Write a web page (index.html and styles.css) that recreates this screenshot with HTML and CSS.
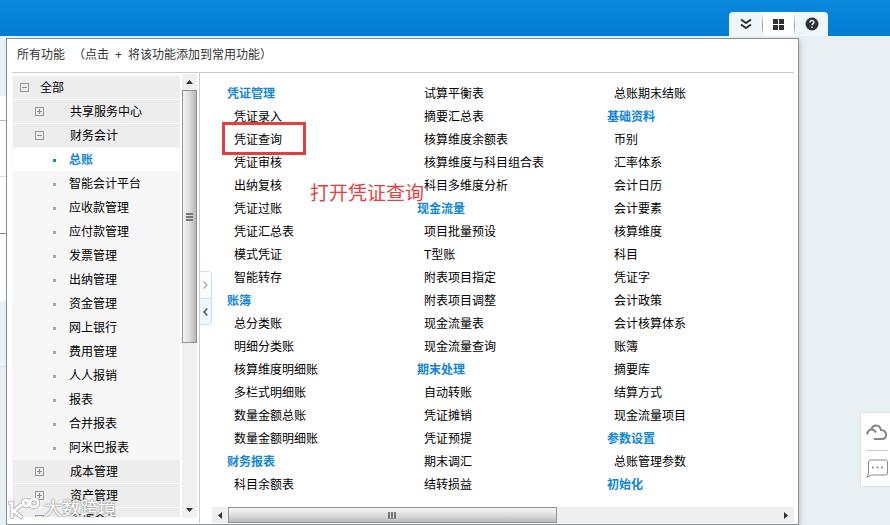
FILE: index.html
```html
<!DOCTYPE html>
<html lang="zh-CN">
<head>
<meta charset="utf-8">
<title>所有功能</title>
<link rel="stylesheet" href="styles.css">
</head>
<body>
<header class="topbar">
  <nav class="tabs">
    <button class="tab" aria-label="展开"><svg width="12" height="12" viewBox="0 0 12 12" fill="none" stroke="#2f3133" stroke-width="2"><path d="M1 1.500 6 5l5-3.500M1 6.500 6 10l5-3.500"/></svg></button>
    <button class="tab tab-on" aria-label="所有功能"><svg width="12" height="12" viewBox="0 0 12 12" fill="#2f3133"><path d="M0 1h5v5H0zM6 1h5v5H6zM0 7h5v5H0zM6 7h5v5H6z"/></svg></button>
    <button class="tab" aria-label="帮助"><svg width="14" height="14" viewBox="0 0 14 14"><circle cx="7" cy="7" r="6.500" fill="#2f3133"/><path d="M5 5.500C5 2.800 9 2.900 9 5.300 9 6.700 7 6.600 7 8.300M7 9.500V11" fill="none" stroke="#e8eef2" stroke-width="1.400"/></svg></button>
  </nav>
</header>
<div class="desk">
  <div class="edge"><i class="e1"></i><i class="e2"></i><i class="e3"></i><i class="e4"></i><i class="e5"></i><i class="e6"></i></div>
  <main class="panel">
    <div class="head"><span>所有功能</span><span class="hint"><span>（点击</span><span>+</span><span>将该功能添加到常用功能）</span></span></div>
    <div class="body">
      <ul class="tree">
        <li class="group root"><button class="box" aria-label="折叠"></button><a href="#">全部</a></li>
        <li class="group"><button class="box plus" aria-label="展开"></button><a href="#">共享服务中心</a></li>
        <li class="group"><button class="box" aria-label="折叠"></button><a href="#">财务会计</a></li>
        <li class="leaf on"><a href="#">总账</a></li>
        <li class="leaf"><a href="#">智能会计平台</a></li>
        <li class="leaf"><a href="#">应收款管理</a></li>
        <li class="leaf"><a href="#">应付款管理</a></li>
        <li class="leaf"><a href="#">发票管理</a></li>
        <li class="leaf"><a href="#">出纳管理</a></li>
        <li class="leaf"><a href="#">资金管理</a></li>
        <li class="leaf"><a href="#">网上银行</a></li>
        <li class="leaf"><a href="#">费用管理</a></li>
        <li class="leaf"><a href="#">人人报销</a></li>
        <li class="leaf"><a href="#">报表</a></li>
        <li class="leaf"><a href="#">合并报表</a></li>
        <li class="leaf"><a href="#">阿米巴报表</a></li>
        <li class="group"><button class="box plus" aria-label="展开"></button><a href="#">成本管理</a></li>
        <li class="group"><button class="box plus" aria-label="展开"></button><a href="#">资产管理</a></li>
        <li class="group"><button class="box plus" aria-label="展开"></button><a href="#">管理会计</a></li>
      </ul>
      <div class="vbar">
        <button class="arrow" aria-label="向上"><svg width="7" height="4" viewBox="0 0 7 4"><path d="M0 4 3.500 0 7 4z" fill="#333"/></svg></button>
        <div class="vthumb"><svg width="7" height="8" viewBox="0 0 7 8" fill="#777"><path d="M0 0h7v2H0zM0 3h7v2H0zM0 6h7v2H0z"/></svg></div>
        <div class="rest"></div>
        <button class="arrow" aria-label="向下"><svg width="7" height="4" viewBox="0 0 7 4"><path d="M0 0h7L3.500 4z" fill="#333"/></svg></button>
      </div>
      <section class="content">
        <div class="columns">
          <ul>
            <li class="title">凭证管理</li>
            <li><a href="#">凭证录入</a></li>
            <li class="marked"><a href="#">凭证查询</a></li>
            <li><a href="#">凭证审核</a></li>
            <li><a href="#">出纳复核</a></li>
            <li><a href="#">凭证过账</a></li>
            <li><a href="#">凭证汇总表</a></li>
            <li><a href="#">模式凭证</a></li>
            <li><a href="#">智能转存</a></li>
            <li class="title">账簿</li>
            <li><a href="#">总分类账</a></li>
            <li><a href="#">明细分类账</a></li>
            <li><a href="#">核算维度明细账</a></li>
            <li><a href="#">多栏式明细账</a></li>
            <li><a href="#">数量金额总账</a></li>
            <li><a href="#">数量金额明细账</a></li>
            <li class="title">财务报表</li>
            <li><a href="#">科目余额表</a></li>
          </ul>
          <ul>
            <li><a href="#">试算平衡表</a></li>
            <li><a href="#">摘要汇总表</a></li>
            <li><a href="#">核算维度余额表</a></li>
            <li><a href="#">核算维度与科目组合表</a></li>
            <li><a href="#">科目多维度分析</a></li>
            <li class="title">现金流量</li>
            <li><a href="#">项目批量预设</a></li>
            <li><a href="#">T型账</a></li>
            <li><a href="#">附表项目指定</a></li>
            <li><a href="#">附表项目调整</a></li>
            <li><a href="#">现金流量表</a></li>
            <li><a href="#">现金流量查询</a></li>
            <li class="title">期末处理</li>
            <li><a href="#">自动转账</a></li>
            <li><a href="#">凭证摊销</a></li>
            <li><a href="#">凭证预提</a></li>
            <li><a href="#">期末调汇</a></li>
            <li><a href="#">结转损益</a></li>
          </ul>
          <ul>
            <li><a href="#">总账期末结账</a></li>
            <li class="title">基础资料</li>
            <li><a href="#">币别</a></li>
            <li><a href="#">汇率体系</a></li>
            <li><a href="#">会计日历</a></li>
            <li><a href="#">会计要素</a></li>
            <li><a href="#">核算维度</a></li>
            <li><a href="#">科目</a></li>
            <li><a href="#">凭证字</a></li>
            <li><a href="#">会计政策</a></li>
            <li><a href="#">会计核算体系</a></li>
            <li><a href="#">账簿</a></li>
            <li><a href="#">摘要库</a></li>
            <li><a href="#">结算方式</a></li>
            <li><a href="#">现金流量项目</a></li>
            <li class="title">参数设置</li>
            <li><a href="#">总账管理参数</a></li>
            <li class="title">初始化</li>
          </ul>
        </div>
        <div class="hbar">
          <button class="arrow" aria-label="向左"><svg width="4" height="7" viewBox="0 0 4 7"><path d="M4 0v7L0 3.500z" fill="#333"/></svg></button>
          <div class="hthumb"><svg width="8" height="7" viewBox="0 0 8 7" fill="#777"><path d="M0 0h2v7H0zM3 0h2v7H3zM6 0h2v7H6z"/></svg></div>
          <div class="rest"></div>
          <button class="arrow" aria-label="向右"><svg width="4" height="7" viewBox="0 0 4 7"><path d="M0 0v7l4-3.500z" fill="#333"/></svg></button>
        </div>
        <div class="flip">
          <button aria-label="展开侧栏"><svg width="5" height="8" viewBox="0 0 5 8" fill="none" stroke="#aaa" stroke-width="1.300"><path d="m.7.500 3.300 3.500L.7 7.500"/></svg></button>
          <button class="flip-on" aria-label="收起侧栏"><svg width="5" height="8" viewBox="0 0 5 8" fill="none" stroke="#555" stroke-width="1.500"><path d="M4.300.500 1 4l3.300 3.500"/></svg></button>
        </div>
        <p class="note">打开凭证查询</p>
      </section>
    </div>
  </main>
  <aside class="tools">
    <button aria-label="云服务"><svg width="22" height="17" viewBox="0 0 22 17" fill="none" stroke="#858585" stroke-width="2"><path d="M1.500 10.500C1 7 4 4.500 7.500 6c1.500.700 2 1.500 2.500 2.500M5.500 5C7 .500 13.500 0 15 6c3 0 5 2 5 4.500S18.500 15 16 15H8"/></svg></button>
    <button aria-label="消息"><svg width="22" height="19" viewBox="0 0 22 19" fill="none" stroke="#8b8b8b"><path d="M4.500 1h15q2 0 2 2v11q0 2-2 2H5.500L1 18.300 2.500 14V3q0-2 2-2z"/><path d="M6 7.500h2v2H6zM10.500 7.500h2v2h-2zM15 7.500h2v2h-2z" fill="#999" stroke="none"/></svg></button>
  </aside>
</div>
<div class="watermark">
  <svg width="32" height="22" viewBox="0 0 32 22" fill="none" stroke-linecap="round"><g stroke="#bbb" stroke-width="4.500"><path d="M2 5h2v14M13 7 6 13l7 6"/><circle cx="18" cy="5" r="3"/><circle cx="26" cy="5" r="4"/></g><g stroke="#fff" stroke-width="2.500"><path d="M2 5h2v14M13 7 6 13l7 6"/><circle cx="18" cy="5" r="3"/><circle cx="26" cy="5" r="4"/></g></svg>
  <span>大数跨境</span>
</div>
</body>
</html>
```
FILE: styles.css
```css
*, *::before, *::after { box-sizing: border-box; }
body {
  margin: 0;
  height: 100vh;
  display: flex;
  flex-direction: column;
  overflow: hidden;
  background: #e8f0f4;
  color: #000;
  font: 12px/23px "Liberation Sans", "Noto Sans CJK SC", sans-serif;
}
ul { list-style: none; margin: 0; padding: 0; }
a { color: inherit; text-decoration: none; }
button { border: 0; padding: 0; background: none; display: flex; align-items: center; justify-content: center; }

.topbar {
  height: 36px;
  flex: none;
  display: flex;
  align-items: flex-end;
  justify-content: flex-end;
  padding-right: 62px;
  background: linear-gradient(#0b89dc, #007cd3);
}
.tabs { display: flex; border-radius: 4px 4px 0 0; overflow: hidden; }
.tab { width: 33px; height: 24px; background: #f0f7fc; }
.tab-on {
  background:
    linear-gradient(#fff, #999 60%, #fff) left / 1px 100% no-repeat,
    linear-gradient(#fff, #999 60%, #fff) right / 1px 100% no-repeat,
    #fff;
}

.desk { flex: 1; min-height: 0; display: flex; position: relative; }
.edge { width: 6px; display: flex; flex-direction: column; }
.edge i { border-bottom: 1px solid #ddd; background: #fff; }
.edge .e1 { height: 60px; background: #e7f1f7; border: 0; }
.edge .e2 { height: 25px; border-color: #bbb; }
.edge .e3 { height: 56px; }
.edge .e4 { height: 57px; border-color: #888; }
.edge .e5 { height: 67px; border: 0; }
.edge .e6 { height: 66px; background: #e7f1f7; }

.panel {
  flex: 1;
  min-width: 0;
  margin: 2px 91px 0 0;
  padding: 0 4px 1px 5px;
  display: flex;
  flex-direction: column;
  background: #fff;
  border: 1px solid #8b9095;
  box-shadow: 2px 2px 4px #c5cdd2;
}
.head { height: 34px; flex: none; display: flex; align-items: center; gap: 8px; padding: 0 5px; border-bottom: 1px solid #ccc; color: #333; }
.hint { display: flex; gap: 6px; }
.body { flex: 1; min-height: 0; display: flex; }

.tree { width: 168px; flex: none; margin: 3px 2px 6px 0; overflow: hidden; background: #f7f7f7; border-left: 1px solid #f7f7f7; }
.tree li { height: 24px; display: flex; align-items: center; }
.tree a { padding-top: 1px; }
.group { background: #ededed; border-bottom: 1px solid #fafafa; padding-left: 22px; gap: 26px; }
.tree .root { padding-left: 7px; gap: 11px; }
.box {
  width: 9px; height: 9px; border: 1px solid #999;
  background: linear-gradient(#888, #888) center / 5px 1px no-repeat;
}
.plus { background: linear-gradient(#888, #888) center / 5px 1px no-repeat, linear-gradient(#888, #888) center / 1px 5px no-repeat; }
.leaf { padding-left: 40px; gap: 13px; }
.leaf::before { content: ""; width: 3px; height: 3px; background: #aaa; }
.on { background: #fff; border: solid #f7f7f7; border-width: 1px 0; color: #0f86d8; font-weight: 700; }
.on::before { background: #0f86d8; }

.vbar { width: 15px; flex: none; margin: 1px 2px 5px 0; display: flex; flex-direction: column; background: #f0f0f0; }
.arrow { width: 16px; height: 16px; flex: none; }
.vbar .arrow { width: 15px; }
.rest { flex: 1; }
.vthumb { height: 253px; border: 1px solid #929292; background: linear-gradient(90deg, #f6f6f6, #ddd 50%, #b5b5b8); display: flex; align-items: center; justify-content: center; }

.content { flex: 1; min-width: 0; position: relative; display: flex; flex-direction: column; border-left: 1px solid #ccc; padding-left: 12px; }
.columns { flex: 1; min-height: 0; display: grid; grid-template-columns: 190px 190px 1fr; padding: 10px 0 0 15px; }
.columns li { height: 23px; padding-left: 7px; }
.columns .title { padding-left: 0; color: #0f86d8; font-weight: 700; }
.columns .marked { position: relative; }
.marked::after { content: ""; position: absolute; left: -5px; top: -7px; width: 84px; height: 33px; border: 3px solid #e63e3e; }
.hbar { height: 16px; flex: none; display: flex; background: #efefef; }
.hthumb { width: 56.500%; border: 1px solid #929292; background: linear-gradient(#f6f6f6, #ddd 50%, #bbb); display: flex; align-items: center; justify-content: center; }

.flip { position: absolute; left: 0; top: 198px; width: 12px; border: 1px solid #c9e2f0; border-left: 0; border-radius: 0 4px 4px 0; overflow: hidden; }
.flip button { width: 11px; height: 26px; background: #fafcfd; }
.flip .flip-on { background: #edf7fc; border-top: 1px solid #c9e2f0; }
.note { position: absolute; left: 110px; top: 109px; margin: 0; font-size: 19px; line-height: 24px; color: #e63e3e; white-space: nowrap; }

.tools { position: absolute; right: 0; top: 376px; width: 30px; padding: 1px 3px 0 5px; background: #fff; border: 1px solid #dce3e7; border-right: 0; }
.tools button { width: 22px; height: 36px; }
.tools button + button { border-top: 1px solid #ccc; }

.watermark { position: absolute; left: 8px; bottom: 4px; display: flex; align-items: center; gap: 4px; font-size: 18px; line-height: 24px; color: #fff; text-shadow: 0 0 2px #888, 0 0 2px #999; }
```
